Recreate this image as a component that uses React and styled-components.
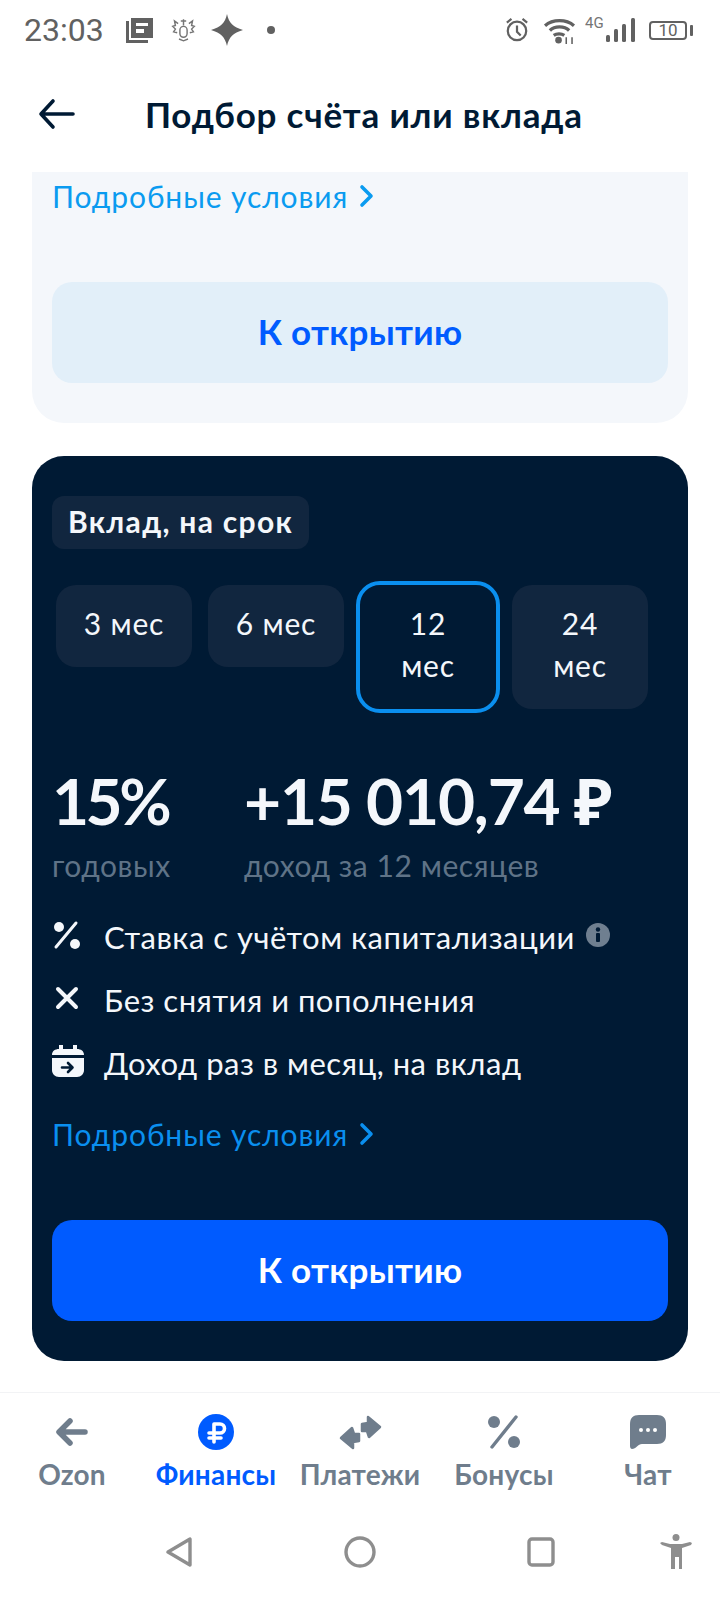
import styled, { createGlobalStyle } from "styled-components";

const GlobalStyle = createGlobalStyle`
  html, body { margin: 0; padding: 0; background: #ffffff; }
  body { font-family: "Lato", "Open Sans", "Noto Sans", sans-serif; }
`;

const Page = styled.div`
  width: 720px;
  height: 1600px;
  display: flex;
  flex-direction: column;
  overflow: hidden;
  background: #ffffff;
`;

// status bar
const StatusBar = styled.div`
  height: 60px;
  padding: 0 27px 0 24px;
  display: flex;
  align-items: center;
  justify-content: space-between;
  color: #616161;
`;
const StatusGroup = styled.div`
  display: flex;
  align-items: center;
`;
const Clock = styled.span`
  font: 400 32px/60px Roboto, sans-serif;
  width: 102px;
`;
const StatusIcon = styled.svg`
  flex: none;
  margin-left: ${(p) => p.$gap || 0}px;
`;
const Battery = styled.div`
  width: 38px;
  height: 19px;
  border: 2px solid #616161;
  border-radius: 4px;
  box-sizing: border-box;
  font: 400 17px/15px Roboto, sans-serif;
  text-align: center;
  margin-left: 14px;
`;
const BatteryTip = styled.div`
  width: 3px;
  height: 11px;
  background: #616161;
  border-radius: 1px;
  margin-left: 3px;
`;

// header
const Header = styled.div`
  height: 112px;
  display: flex;
  align-items: center;
  padding: 0 0 4px 38px;
  box-sizing: border-box;
`;
const HeaderTitle = styled.h1`
  margin: 0 0 0 69px;
  font-size: 35px;
  line-height: 40px;
  letter-spacing: 0.8px;
  font-weight: 700;
  color: #001a34;
`;

const Content = styled.div`
  flex: 1;
  display: flex;
  flex-direction: column;
  gap: 33px;
  padding: 0 32px;
`;

const Card = styled.div`
  background: ${(p) => (p.$dark ? "#001a34" : "#f4f7fb")};
  border-radius: ${(p) => (p.$dark ? "32px" : "0 0 32px 32px")};
  padding: ${(p) => (p.$dark ? "40px 20px" : "6px 20px 40px")};
`;

const DetailsLink = styled.a`
  display: flex;
  align-items: center;
  gap: 10px;
  height: 36px;
  font-size: 30px;
  line-height: 36px;
  letter-spacing: 0.9px;
  color: ${(p) => (p.$dark ? "#0a8fef" : "#0a9bf0")};
`;

const OpenButton = styled.button`
  display: block;
  width: 100%;
  height: 101px;
  margin-top: 68px;
  padding: 0 0 4px;
  border: 0;
  border-radius: 20px;
  font-family: inherit;
  font-size: 35px;
  letter-spacing: 0.3px;
  font-weight: 700;
  background: ${(p) => (p.$dark ? "#005bff" : "#e2eff9")};
  color: ${(p) => (p.$dark ? "#ffffff" : "#005bff")};
`;

const Chip = styled.div`
  width: fit-content;
  height: 53px;
  padding: 0 16px;
  border-radius: 12px;
  background: #11263f;
  color: #f4f7fb;
  font-size: 30px;
  letter-spacing: 1.3px;
  font-weight: 700;
  line-height: 51px;
`;

const Tabs = styled.div`
  display: flex;
  align-items: flex-start;
  gap: 8px;
  margin-top: 32px;
`;
const Tab = styled.div`
  width: 144px;
  box-sizing: border-box;
  padding: 17px 24px 23px;
  border: 4px solid ${(p) => (p.$active ? "#0a8fef" : "transparent")};
  border-radius: 24px;
  background: ${(p) => (p.$active ? "transparent" : "#11263f")};
  background-clip: padding-box;
  color: #f4f7fb;
  font-size: 30px;
  letter-spacing: 0.8px;
  line-height: 42px;
  text-align: center;
`;

const Stats = styled.div`
  display: grid;
  grid-template-columns: 192px auto;
  margin-top: 52px;
`;
const StatValue = styled.div`
  font-size: 64px;
  line-height: 72px;
  letter-spacing: ${(p) => (p.$tight ? "-3.5px" : "-1.2px")};
  font-weight: 700;
  color: #f4f7fb;
  white-space: nowrap;
`;
const StatLabel = styled.div`
  font-size: 30px;
  letter-spacing: 0.55px;
  line-height: 36px;
  margin-top: 10px;
  color: #5f7387;
  white-space: nowrap;
`;

const Conditions = styled.div`
  margin-top: 34px;
  display: flex;
  flex-direction: column;
  gap: 23px;
  margin-bottom: 33px;
`;
const Condition = styled.div`
  display: flex;
  align-items: center;
  height: 40px;
  color: #f4f7fb;
  font-size: 31px;
  letter-spacing: 0.5px;
  line-height: 40px;
  white-space: nowrap;
`;
const ConditionIcon = styled.div`
  width: 52px;
  flex: none;
  display: flex;
  align-items: center;
  margin-top: -4px;
`;
const InfoIcon = styled.svg`
  margin: -4px 0 0 11px;
`;

// bottom nav
const BottomNav = styled.nav`
  height: 112px;
  box-sizing: border-box;
  border-top: 1px solid #f2f3f5;
  display: grid;
  grid-template-columns: repeat(5, 144px);
  flex: none;
`;
const NavItem = styled.div`
  display: flex;
  flex-direction: column;
  align-items: center;
  padding-top: 19px;
  color: ${(p) => (p.$active ? "#005bff" : "#6f7d8c")};
`;
const NavIconBox = styled.div`
  height: 40px;
  display: flex;
  align-items: center;
`;
const NavLabel = styled.span`
  margin-top: 5px;
  font-size: 28px;
  letter-spacing: 0.2px;
  line-height: 34px;
  font-weight: 700;
  white-space: nowrap;
`;

const SystemNav = styled.div`
  height: 96px;
  flex: none;
  display: flex;
  align-items: center;
  padding-left: 165px;
`;
const SystemSlot = styled.div`
  width: ${(p) => p.$w}px;
  flex: none;
  display: flex;
`;

const Chevron = () => (
  <svg width="18" height="24" viewBox="0 0 18 24" fill="none">
    <path d="M4 3l9 9-9 9" stroke="currentColor" strokeWidth="3.6" strokeLinecap="round" strokeLinejoin="round" />
  </svg>
);

const tabs = [
  { label: "3 мес" },
  { label: "6 мес" },
  { label: "12 мес", active: true },
  { label: "24 мес" },
];

export default function App() {
  return (
    <Page>
      <GlobalStyle />
      <StatusBar>
        <StatusGroup>
          <Clock>23:03</Clock>
          <StatusIcon width="27" height="26" viewBox="0 0 27 26" fill="#616161">
            <path d="M5 1h22v20H5z" />
            <path d="M0 4h3v19h19v3H0z" />
            <path d="M10 6h12v3H10zM10 12h8v4h-8z" fill="#fff" />
          </StatusIcon>
          <StatusIcon $gap={17} width="27" height="24" viewBox="0 0 30 26" fill="none" stroke="#757575" strokeWidth="1.6">
            <rect x="11" y="9" width="8" height="12" rx="4" />
            <path d="M15 1v7M12 3h6M9 6L5 3l1 5-3 1 3 3-2 3 4 1M21 6l4-3-1 5 3 1-3 3 2 3-4 1M10 23l5 2 5-2" />
          </StatusIcon>
          <StatusIcon $gap={14} width="32" height="32" viewBox="0 0 32 32" fill="#616161">
            <path d="M16 0C18 9 22 13 32 16 22 19 18 23 16 32 14 23 10 19 0 16 10 13 14 9 16 0z" />
          </StatusIcon>
          <StatusIcon $gap={24} width="8" height="8" viewBox="0 0 8 8" fill="#616161">
            <circle cx="4" cy="4" r="4" />
          </StatusIcon>
        </StatusGroup>
        <StatusGroup>
          <StatusIcon width="24" height="26" viewBox="0 0 26 28" fill="none" stroke="#616161" strokeWidth="2.4">
            <circle cx="13" cy="15" r="10" />
            <path d="M13 9v7l4 4M2 6l5-4M24 6l-5-4" />
          </StatusIcon>
          <StatusIcon $gap={14} width="33" height="27" viewBox="0 0 34 28" fill="none" stroke="#616161" strokeWidth="3.4">
            <path d="M2 9c8-7 22-7 30 0M7 14c5-5 15-5 20 0M11 19c3-2 8-2 11 0" />
            <circle cx="16" cy="24" r="3.4" fill="#616161" stroke="none" />
            <path d="M24 21v7M30 21v7" strokeWidth="1.6" />
          </StatusIcon>
          <StatusIcon $gap={9} width="50" height="34" viewBox="0 0 50 34">
            <text x="0" y="15" fontFamily="Roboto" fontSize="15" fill="#757575">4G</text>
            <rect x="21" y="22" width="4" height="7" rx="1.5" fill="#616161" />
            <rect x="29" y="16" width="4" height="13" rx="1.5" fill="#616161" />
            <rect x="37" y="11" width="4" height="18" rx="1.5" fill="#616161" />
            <rect x="46" y="5" width="4" height="24" rx="1.5" fill="#616161" />
          </StatusIcon>
          <Battery>10</Battery>
          <BatteryTip />
        </StatusGroup>
      </StatusBar>

      <Header>
        <svg width="38" height="32" viewBox="0 0 38 32" fill="none" stroke="#001a34" strokeWidth="3.6" strokeLinecap="round" strokeLinejoin="round">
          <path d="M35 16H3M15 3L3 16l12 13" />
        </svg>
        <HeaderTitle>Подбор счёта или вклада</HeaderTitle>
      </Header>

      <Content>
        <Card>
          <DetailsLink>
            Подробные условия <Chevron />
          </DetailsLink>
          <OpenButton>К открытию</OpenButton>
        </Card>

        <Card $dark>
          <Chip>Вклад, на срок</Chip>
          <Tabs>
            {tabs.map((t) => (
              <Tab key={t.label} $active={t.active}>
                {t.label}
              </Tab>
            ))}
          </Tabs>

          <Stats>
            <div>
              <StatValue $tight>15%</StatValue>
              <StatLabel>годовых</StatLabel>
            </div>
            <div>
              <StatValue>+15 010,74 ₽</StatValue>
              <StatLabel>доход за 12 месяцев</StatLabel>
            </div>
          </Stats>

          <Conditions>
            <Condition>
              <ConditionIcon>
                <svg width="30" height="30" viewBox="0 0 30 30" fill="#f4f7fb">
                  <circle cx="7" cy="7" r="5" />
                  <circle cx="23" cy="24" r="5" />
                  <path d="M24 3L4 27" stroke="#f4f7fb" strokeWidth="3" strokeLinecap="round" />
                </svg>
              </ConditionIcon>
              Ставка с учётом капитализации
              <InfoIcon width="24" height="24" viewBox="0 0 24 24">
                <circle cx="12" cy="12" r="12" fill="#6f7f90" />
                <circle cx="12" cy="6.5" r="2.2" fill="#001a34" />
                <rect x="10" y="10" width="4" height="9" rx="1" fill="#001a34" />
              </InfoIcon>
            </Condition>
            <Condition>
              <ConditionIcon>
                <svg width="30" height="24" viewBox="0 0 30 24" fill="none" stroke="#f4f7fb" strokeWidth="4" strokeLinecap="round">
                  <path d="M6 3l18 18M24 3L6 21" />
                </svg>
              </ConditionIcon>
              Без снятия и пополнения
            </Condition>
            <Condition>
              <ConditionIcon>
                <svg width="32" height="32" viewBox="0 0 32 32">
                  <path d="M7 0h4v4h10V0h4v4c4 0 7 2 7 6H0c0-4 3-6 7-6z" fill="#f4f7fb" />
                  <path d="M0 13h32v12c0 4-3 7-7 7H7c-4 0-7-3-7-7z" fill="#f4f7fb" />
                  <path d="M10 22.5h10M16 18l4.5 4.5L16 27" stroke="#001a34" strokeWidth="2.6" fill="none" strokeLinecap="round" strokeLinejoin="round" />
                </svg>
              </ConditionIcon>
              Доход раз в месяц, на вклад
            </Condition>
          </Conditions>

          <DetailsLink $dark>
            Подробные условия <Chevron />
          </DetailsLink>
          <OpenButton $dark>К открытию</OpenButton>
        </Card>
      </Content>

      <BottomNav>
        <NavItem>
          <NavIconBox>
            <svg width="34" height="32" viewBox="0 0 34 32" fill="none" stroke="currentColor" strokeWidth="5.5" strokeLinecap="round" strokeLinejoin="round">
              <path d="M30 16H5M15 5L4 16l11 11" />
            </svg>
          </NavIconBox>
          <NavLabel>Ozon</NavLabel>
        </NavItem>
        <NavItem $active>
          <NavIconBox>
            <svg width="36" height="36" viewBox="0 0 36 36">
              <circle cx="18" cy="18" r="18" fill="#005bff" />
              <path d="M16 28V10h6a4.5 4.5 0 010 9H11M11 24h12" fill="none" stroke="#fff" strokeWidth="3.6" strokeLinecap="round" strokeLinejoin="round" />
            </svg>
          </NavIconBox>
          <NavLabel>Финансы</NavLabel>
        </NavItem>
        <NavItem>
          <NavIconBox>
            <svg width="43" height="39" viewBox="0 0 43 39" fill="currentColor" stroke="currentColor" strokeWidth="2.5" strokeLinejoin="round">
              <path d="M23 11l6-1V4l12 10-11 10-2-6h-5z" />
              <path d="M20 28l-6 1v6L2 25l11-10 2 6h5z" />
            </svg>
          </NavIconBox>
          <NavLabel>Платежи</NavLabel>
        </NavItem>
        <NavItem>
          <NavIconBox>
            <svg width="34" height="36" viewBox="0 0 34 36" fill="currentColor">
              <ellipse cx="7" cy="8" rx="6" ry="6" />
              <ellipse cx="27" cy="28" rx="6" ry="6" />
              <path d="M29 3L5 33" stroke="currentColor" strokeWidth="3.4" strokeLinecap="round" />
            </svg>
          </NavIconBox>
          <NavLabel>Бонусы</NavLabel>
        </NavItem>
        <NavItem>
          <NavIconBox>
            <svg width="36" height="34" viewBox="0 0 36 34">
              <path d="M9 0h18c6 0 9 3 9 9v11c0 6-3 9-9 9H12c-4 0-6 5-10 5-1 0-2-1-2-3V9c0-6 3-9 9-9z" fill="currentColor" />
              <circle cx="11" cy="15" r="2" fill="#fff" />
              <circle cx="18" cy="15" r="2" fill="#fff" />
              <circle cx="25" cy="15" r="2" fill="#fff" />
            </svg>
          </NavIconBox>
          <NavLabel>Чат</NavLabel>
        </NavItem>
      </BottomNav>

      <SystemNav>
        <SystemSlot $w={179}>
          <svg width="28" height="30" viewBox="0 0 28 30" fill="none" stroke="#8e8e8e" strokeWidth="3.4" strokeLinejoin="round">
            <path d="M25 2v26L3 15z" />
          </svg>
        </SystemSlot>
        <SystemSlot $w={183}>
          <svg width="32" height="32" viewBox="0 0 32 32" fill="none" stroke="#8e8e8e" strokeWidth="3.4">
            <circle cx="16" cy="16" r="14" />
          </svg>
        </SystemSlot>
        <SystemSlot $w={133}>
          <svg width="28" height="30" viewBox="0 0 28 30" fill="none" stroke="#8e8e8e" strokeWidth="3.4">
            <rect x="2" y="2" width="24" height="26" rx="3" />
          </svg>
        </SystemSlot>
        <SystemSlot $w={40}>
          <svg width="32" height="36" viewBox="0 0 32 36" fill="#8e8e8e">
            <circle cx="16" cy="3.5" r="3.5" />
            <path d="M0 9l2-1 8 2h12l8-2 2 1-1 2-9 3v21h-3V23h-4v12H11V14L2 11z" />
          </svg>
        </SystemSlot>
      </SystemNav>
    </Page>
  );
}
